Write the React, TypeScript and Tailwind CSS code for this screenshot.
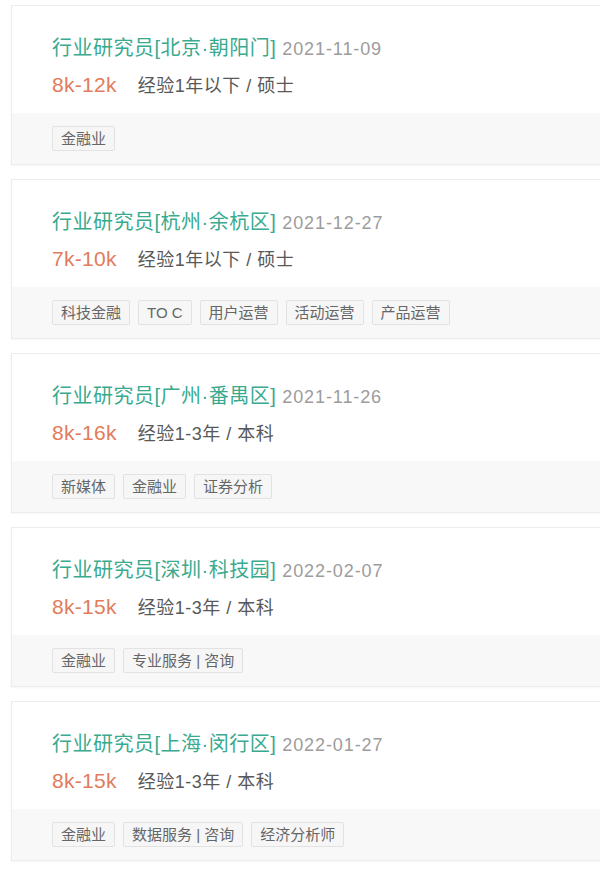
const jobs = [
  {
    title: '行业研究员[北京·朝阳门]',
    date: '2021-11-09',
    salary: '8k-12k',
    req: '经验1年以下 / 硕士',
    tags: ['金融业'],
  },
  {
    title: '行业研究员[杭州·余杭区]',
    date: '2021-12-27',
    salary: '7k-10k',
    req: '经验1年以下 / 硕士',
    tags: ['科技金融', 'TO C', '用户运营', '活动运营', '产品运营'],
  },
  {
    title: '行业研究员[广州·番禺区]',
    date: '2021-11-26',
    salary: '8k-16k',
    req: '经验1-3年 / 本科',
    tags: ['新媒体', '金融业', '证券分析'],
  },
  {
    title: '行业研究员[深圳·科技园]',
    date: '2022-02-07',
    salary: '8k-15k',
    req: '经验1-3年 / 本科',
    tags: ['金融业', '专业服务 | 咨询'],
  },
  {
    title: '行业研究员[上海·闵行区]',
    date: '2022-01-27',
    salary: '8k-15k',
    req: '经验1-3年 / 本科',
    tags: ['金融业', '数据服务 | 咨询', '经济分析师'],
  },
]

type Job = (typeof jobs)[number]

function JobCard({ job }: { job: Job }) {
  return (
    <div className="ml-[11px] h-[160px] flex flex-col border-y border-l border-[#ececec] bg-white shadow-[0_1px_2px_rgba(0,0,0,0.04)]">
      <div className="flex-1 pl-[40px] pt-[28px]">
        <div className="flex items-baseline h-[28px]">
          <span className="text-[20px] text-[#3aaa8e] tracking-[0.5px] leading-[28px]">{job.title}</span>
          <span className="ml-[6px] text-[18px] text-[#9c9c9c] tracking-[0.9px] leading-[28px]">{job.date}</span>
        </div>
        <div className="flex items-baseline mt-[9px] h-[28px]">
          <span className="text-[21px] text-[#e27c5a] tracking-[0.3px] leading-[28px]">{job.salary}</span>
          <span className="ml-[21px] text-[18px] text-[#585858] tracking-[0.5px] leading-[28px]">{job.req}</span>
        </div>
      </div>
      <div className="h-[51px] bg-[#f8f8f8] flex items-center gap-[8px] pl-[40px]">
        {job.tags.map((t) => (
          <span
            key={t}
            className="h-[25px] px-[8px] flex items-center border border-[#e2e2e2] rounded-[2px] bg-[#f6f6f6] text-[15px] text-[#666] leading-none"
          >
            {t}
          </span>
        ))}
      </div>
    </div>
  )
}

export default function App() {
  return (
    <div
      className="w-[600px] h-[873px] overflow-hidden bg-white pt-[5px] flex flex-col gap-[14px]"
      style={{ fontFamily: '"Liberation Sans", "Noto Sans CJK SC", sans-serif' }}
    >
      {jobs.map((job) => (
        <JobCard key={job.title} job={job} />
      ))}
    </div>
  )
}
